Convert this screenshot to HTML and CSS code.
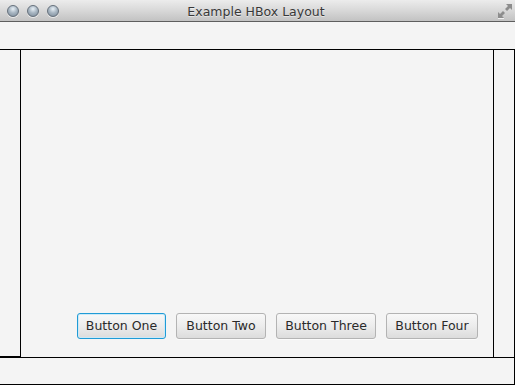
FILE: index.html
```html
<!DOCTYPE html>
<html>
<head>
<meta charset="utf-8">
<link rel="stylesheet" href="styles.css">
</head>
<body>
<div class="window">
  <div class="titlebar">
    <div class="lights">
      <span class="light"></span><span class="light"></span><span class="light"></span>
    </div>
    <div class="title">Example HBox Layout</div>
    <svg class="resize" width="16" height="16" viewBox="0 0 16 16">
      <path d="M9 1 H15 V7 L13 5 L10 8 L8 6 L11 3 Z" fill="#8d8d8d"/>
      <path d="M1 9 V15 H7 L5 13 L8 10 L6 8 L3 11 Z" fill="#8d8d8d"/>
      <path d="M1 15.5 H7" stroke="#f0f0f0" stroke-width="1"/>
    </svg>
  </div>
  <div class="top"></div>
  <div class="middle">
    <div class="side left"></div>
    <div class="center">
      <div class="hbox">
        <button class="btn focused w-one">Button One</button>
        <button class="btn w-two">Button Two</button>
        <button class="btn w-three">Button Three</button>
        <button class="btn w-four">Button Four</button>
      </div>
    </div>
    <div class="side right"></div>
  </div>
  <div class="bottom"></div>
</div>
</body>
</html>
```
FILE: styles.css
```css
html, body {
  margin: 0;
  padding: 0;
}
body {
  width: 515px;
  height: 385px;
  overflow: hidden;
  background: #f4f4f4;
  font-family: "DejaVu Sans", "Liberation Sans", sans-serif;
}
.window {
  display: flex;
  flex-direction: column;
  width: 515px;
  height: 385px;
}
.titlebar {
  height: 21px;
  flex: none;
  border-bottom: 1px solid #5e5e5e;
  background: linear-gradient(#ececec, #d8d8d8 50%, #c2c2c2);
  display: flex;
  align-items: center;
  position: relative;
}
.lights {
  display: flex;
  gap: 8px;
  padding-left: 7px;
  padding-top: 1px;
}
.light {
  width: 12px;
  height: 12px;
  border-radius: 50%;
  box-sizing: border-box;
  border: 1px solid #66717c;
  background: radial-gradient(circle at 50% 30%, #e8f0f6 0%, #a9b7c3 45%, #7a8997 100%);
  box-shadow: 0 1px 0 rgba(255,255,255,0.6);
}
.title {
  flex: 1;
  text-align: center;
  font-size: 12.5px;
  color: #383838;
  padding-right: 62px;
  padding-top: 1px;
  text-shadow: 0 1px 0 rgba(255,255,255,0.5);
}
.resize {
  position: absolute;
  right: 2px;
  top: 3px;
}
.top {
  height: 27px;
  flex: none;
  background: #f4f4f4;
}
.middle {
  flex: none;
  height: 307px;
  display: flex;
  border-top: 1px solid #000;
  border-bottom: 1px solid #000;
}
.side {
  width: 20px;
  flex: none;
  border-right: 1px solid #000;
}
.left {
  box-sizing: border-box;
  height: 307px;
  border-bottom: 1px solid #000;
  width: 21px;
}
.right {
  width: 20px;
}
.center {
  width: 472px;
  flex: none;
  border-right: 1px solid #000;
  display: flex;
  align-items: flex-end;
  justify-content: flex-end;
}
.hbox {
  display: flex;
  gap: 10px;
  padding: 0 15px 18px 0;
}
.btn {
  height: 26px;
  box-sizing: border-box;
  padding: 0;
  text-align: center;
  border: 1px solid #b3b3b3;
  border-radius: 3px;
  background: linear-gradient(#f8f8f8, #ececec 50%, #dcdcdc);
  font-family: "DejaVu Sans", "Liberation Sans", sans-serif;
  font-size: 12.5px;
  color: #2a2a2a;
  line-height: 24px;
  box-shadow: 0 1px 0 rgba(255,255,255,0.6);
  white-space: nowrap;
}
.w-one { width: 89px; }
.w-two { width: 90px; }
.w-three { width: 100px; }
.w-four { width: 92px; }
.btn.focused {
  border-color: #1f9bd6;
  box-shadow: inset 0 0 0 1px #cde9f6;
}
.bottom {
  height: 26px;
  flex: none;
  border-bottom: 1px solid #000;
  border-right: 1px solid #000;
}
```
